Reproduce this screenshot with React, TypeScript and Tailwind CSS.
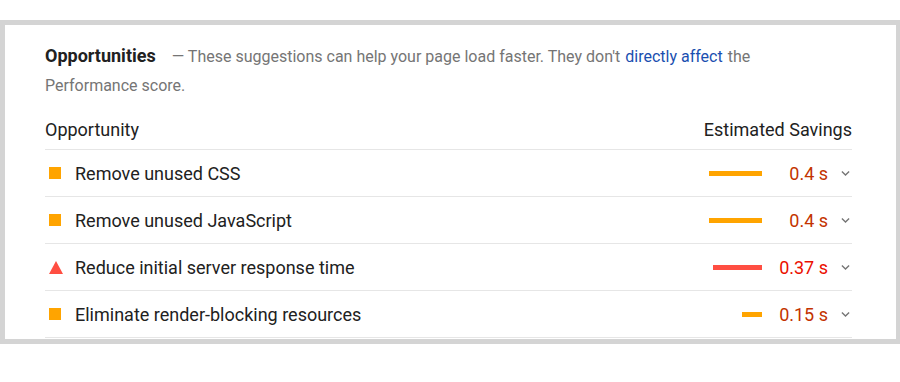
import React from "react";

type Row = { label: string; kind: "avg" | "fail"; bar: number; value: string };

const rows: Row[] = [
  { label: "Remove unused CSS", kind: "avg", bar: 53, value: "0.4 s" },
  { label: "Remove unused JavaScript", kind: "avg", bar: 53, value: "0.4 s" },
  { label: "Reduce initial server response time", kind: "fail", bar: 49, value: "0.37 s" },
  { label: "Eliminate render-blocking resources", kind: "avg", bar: 20, value: "0.15 s" },
];

function Chevron() {
  return (
    <svg width="10" height="7" viewBox="0 0 10 7" className="block">
      <path d="M1 1.2 L5 5.2 L9 1.2" fill="none" stroke="#757575" strokeWidth="1.5" />
    </svg>
  );
}

export default function App() {
  return (
    <div
      className="w-[900px] h-[382px] bg-white pt-[20px]"
      style={{ fontFamily: "Roboto, 'Liberation Sans', sans-serif" }}
    >
      <div className="h-[324px] border-[5px] border-r-4 border-[#d4d4d4] bg-white pl-[40px] pr-[44px] pt-[16px]">
        <div className="text-[16px] leading-[29px] text-[#757575]">
          <div className="whitespace-nowrap">
            <span className="text-[18px] font-bold text-[#212121]">Opportunities</span>
            <span className="ml-[16px]">— These suggestions can help your page load faster. They don't</span>
            <span className="ml-[5px] text-[#1a4fb0]">directly affect</span>
            <span className="ml-[5px]">the</span>
          </div>
          <div>Performance score.</div>
        </div>
        <div className="mt-[18px] flex justify-between border-b border-[#e6e6e6] pb-[7px] text-[18px] leading-[24px] text-[#212121]">
          <span>Opportunity</span>
          <span>Estimated Savings</span>
        </div>
        {rows.map((r) => (
          <div
            key={r.label}
            className="flex h-[47px] items-center border-b border-[#e6e6e6] text-[18px] text-[#212121]"
          >
            <div className="ml-[4px] flex w-[14px] items-center">
              {r.kind === "avg" ? (
                <div className="h-[12px] w-[12px] bg-[#ffa400]" />
              ) : (
                <svg width="14" height="13" viewBox="0 0 14 13" className="block">
                  <polygon points="7,0 14,13 0,13" fill="#ff4e42" />
                </svg>
              )}
            </div>
            <span className="ml-[12px] flex-1">{r.label}</span>
            <div
              className={`h-[5px] ${r.kind === "avg" ? "bg-[#ffa400]" : "bg-[#ff4e42]"}`}
              style={{ width: r.bar }}
            />
            <span
              className={`w-[66px] text-right ${r.kind === "avg" ? "text-[#c33300]" : "text-[#eb0f00]"}`}
            >
              {r.value}
            </span>
            <div className="ml-[13px] mr-[2px] flex w-[9px] justify-center">
              <Chevron />
            </div>
          </div>
        ))}
      </div>
    </div>
  );
}
